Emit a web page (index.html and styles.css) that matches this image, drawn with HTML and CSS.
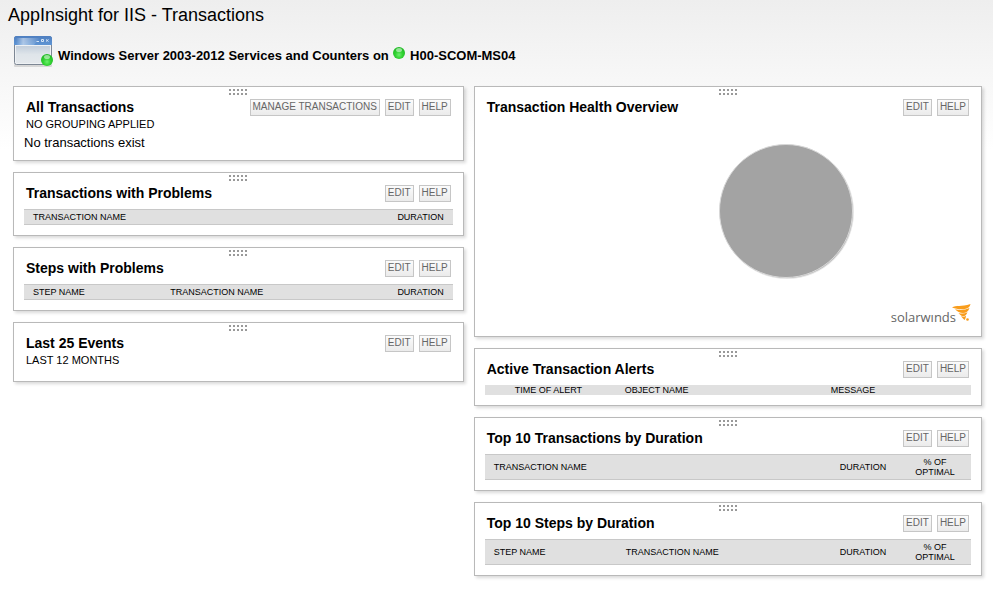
FILE: index.html
```html
<!DOCTYPE html>
<html lang="en">
<head>
  <meta charset="UTF-8" />
  <meta name="viewport" content="width=device-width, initial-scale=1.0"/>
  <title>AppInsight for IIS - Transactions</title>
  <link rel="stylesheet" href="styles.css">
</head>
<body>
  <header class="page-header">
    <h1>AppInsight for IIS - Transactions</h1>
    <div class="node">
      <svg class="app-icon" width="40" height="32" viewBox="0 0 40 32" aria-hidden="true">
        <defs>
          <linearGradient id="bar" x1="0" y1="0" x2="0" y2="1">
            <stop offset="0" stop-color="#4f7fc0"/>
            <stop offset="1" stop-color="#5f95d4"/>
          </linearGradient>
          <linearGradient id="pane" x1="0" y1="0" x2="0" y2="1">
            <stop offset="0" stop-color="#c3cedb"/>
            <stop offset="0.5" stop-color="#dfe5ea"/>
            <stop offset="1" stop-color="#e4e8ec"/>
          </linearGradient>
          <linearGradient id="shine" x1="0" y1="0" x2="1" y2="0">
            <stop offset="0" stop-color="#fff" stop-opacity="0"/>
            <stop offset="0.3" stop-color="#fff" stop-opacity="0.5"/>
            <stop offset="1" stop-color="#fff" stop-opacity="0"/>
          </linearGradient>
          <radialGradient id="up" cx="0.5" cy="0.65" r="0.6">
            <stop offset="0" stop-color="#6cf06c"/>
            <stop offset="0.5" stop-color="#33d233"/>
            <stop offset="1" stop-color="#1fbb25"/>
          </radialGradient>
        </defs>
        <rect x="0" y="28" width="38" height="3" rx="1" fill="#000" opacity="0.12"/>
        <rect x="0.5" y="0.5" width="37" height="28" rx="2" fill="#eef1f4" stroke="#7d8794"/>
        <path d="M0 9V2.500Q0 0 2.500 0H35.500Q38 0 38 2.500V9Z" fill="url(#bar)"/>
        <path d="M2 9V2H26L20 9Z" fill="url(#shine)"/>
        <rect x="2" y="10" width="34" height="17" fill="url(#pane)"/>
        <path d="M22.500 5.500H25M27.500 3.500H29.500V5.500H27.500ZM32 3.500L34.500 5.500M34.500 3.500L32 5.500" fill="none" stroke="#d5e4f5"/>
        <circle cx="33" cy="24" r="6" fill="url(#up)"/>
        <ellipse cx="33" cy="21" rx="3" ry="2" fill="#fff" opacity="0.5"/>
      </svg>
      <p>Windows Server 2003-2012 Services and Counters on
        <svg class="status" width="12" height="12" viewBox="0 0 12 12" role="img" aria-label="Up">
          <circle cx="6" cy="6" r="6" fill="url(#up)"/>
          <ellipse cx="6" cy="3" rx="3" ry="2" fill="#fff" opacity="0.5"/>
        </svg>
        H00-SCOM-MS04</p>
    </div>
  </header>

  <main class="columns">
    <div class="column">
      <section class="panel">
        <div class="grip"></div>
        <div class="panel-head">
          <div>
            <h2>All Transactions</h2>
            <h3>No grouping applied</h3>
          </div>
          <div class="actions">
            <button type="button">Manage Transactions</button>
            <button type="button">Edit</button>
            <button type="button">Help</button>
          </div>
        </div>
        <p class="message">No transactions exist</p>
      </section>

      <section class="panel">
        <div class="grip"></div>
        <div class="panel-head">
          <h2>Transactions with Problems</h2>
          <div class="actions">
            <button type="button">Edit</button>
            <button type="button">Help</button>
          </div>
        </div>
        <table>
          <thead>
            <tr>
              <th>Transaction Name</th>
              <th class="right">Duration</th>
            </tr>
          </thead>
        </table>
      </section>

      <section class="panel">
        <div class="grip"></div>
        <div class="panel-head">
          <h2>Steps with Problems</h2>
          <div class="actions">
            <button type="button">Edit</button>
            <button type="button">Help</button>
          </div>
        </div>
        <table>
          <thead>
            <tr>
              <th class="col-step">Step Name</th>
              <th>Transaction Name</th>
              <th class="right">Duration</th>
            </tr>
          </thead>
        </table>
      </section>

      <section class="panel panel-empty">
        <div class="grip"></div>
        <div class="panel-head">
          <div>
            <h2>Last 25 Events</h2>
            <h3>Last 12 months</h3>
          </div>
          <div class="actions">
            <button type="button">Edit</button>
            <button type="button">Help</button>
          </div>
        </div>
      </section>
    </div>

    <div class="column">
      <section class="panel">
        <div class="grip"></div>
        <div class="panel-head">
          <h2>Transaction Health Overview</h2>
          <div class="actions">
            <button type="button">Edit</button>
            <button type="button">Help</button>
          </div>
        </div>
        <div class="chart">
          <svg class="pie" width="136" height="138" viewBox="0 0 136 138" role="img" aria-label="Transaction health">
            <circle cx="69" cy="69" r="67" fill="#000" opacity="0.1"/>
            <circle cx="69" cy="69" r="66" fill="#000" opacity="0.2"/>
            <circle cx="68" cy="68" r="66.500" fill="#a3a3a3" stroke="#d8d8d8"/>
          </svg>
        </div>
        <div class="brand">
          <span>solarwınds</span>
          <svg width="19" height="18" viewBox="0 0 19 18" aria-hidden="true">
            <g fill="#f99d1c">
              <path d="M0 3.500C4 1 9 3 18.500 0C18 3 16 4.500 12 5.200C8 5.600 4 5 0 3.500Z"/>
              <path d="M3 5.200C8 6.500 13 6 17.500 4C16.500 7.500 14 9 11 9C8 8.800 5 7.500 3 5.200Z"/>
              <path d="M6.500 9C9.500 10 12.500 9.700 15.500 8.200C14.500 11 13 12.200 11 12.200C9.500 12 8 11 6.500 9Z"/>
              <path d="M9 12.200C11 13 12.500 12.800 14 11.800C13.800 14 13.300 15 12.500 16C11.500 14.800 10 13.800 9 12.200Z"/>
              <circle cx="15.500" cy="15.500" r="1.300"/>
            </g>
          </svg>
        </div>
      </section>

      <section class="panel">
        <div class="grip"></div>
        <div class="panel-head">
          <h2>Active Transaction Alerts</h2>
          <div class="actions">
            <button type="button">Edit</button>
            <button type="button">Help</button>
          </div>
        </div>
        <table class="alerts">
          <thead>
            <tr>
              <td class="col-icon"></td>
              <th class="col-time">Time of Alert</th>
              <th class="col-object">Object Name</th>
              <th>Message</th>
            </tr>
          </thead>
        </table>
      </section>

      <section class="panel">
        <div class="grip"></div>
        <div class="panel-head">
          <h2>Top 10 Transactions by Duration</h2>
          <div class="actions">
            <button type="button">Edit</button>
            <button type="button">Help</button>
          </div>
        </div>
        <table class="top10">
          <thead>
            <tr>
              <th>Transaction Name</th>
              <th class="col-number">Duration</th>
              <th class="col-number">% of Optimal</th>
            </tr>
          </thead>
        </table>
      </section>

      <section class="panel">
        <div class="grip"></div>
        <div class="panel-head">
          <h2>Top 10 Steps by Duration</h2>
          <div class="actions">
            <button type="button">Edit</button>
            <button type="button">Help</button>
          </div>
        </div>
        <table class="top10">
          <thead>
            <tr>
              <th class="col-top-step">Step Name</th>
              <th>Transaction Name</th>
              <th class="col-number">Duration</th>
              <th class="col-number">% of Optimal</th>
            </tr>
          </thead>
        </table>
      </section>
    </div>
  </main>
</body>
</html>
```

FILE: styles.css
```css
* {
  box-sizing: border-box;
}

body {
  margin: 0;
  font-family: "Liberation Sans", Arial, sans-serif;
  font-size: 13px;
  color: #000;
  background: #fff linear-gradient(#eeeeee, #ffffff) no-repeat;
  background-size: 100% 150px;
}

h1, h2, h3, p {
  margin: 0;
}

/* Page header */
.page-header {
  padding: 5px 8px 0;
}

.page-header h1 {
  font-size: 18px;
  line-height: 20px;
  font-weight: normal;
}

.node {
  display: flex;
  align-items: center;
  gap: 4px;
  padding: 11px 6px 0;
}

.node p {
  font-weight: bold;
  line-height: 20px;
  padding-top: 8px;
}

.app-icon {
  flex: none;
}

.status {
  margin: 0 1px;
  vertical-align: 1px;
}

/* Layout */
.columns {
  display: grid;
  grid-template-columns: 47fr 53fr;
  gap: 10px;
  align-items: start;
  padding: 18px 11px 13px 13px;
}

.column {
  display: grid;
  gap: 11px;
}

/* Panels */
.panel {
  padding: 2px 10px 10px;
  background: #fff;
  border: 1px solid #b9b9b9;
  box-shadow: 2px 2px 3px rgba(0, 0, 0, 0.15);
}

.panel-empty {
  min-height: 60px;
}

.grip {
  width: 18px;
  height: 6px;
  margin: 0 auto 4px;
  background:
    repeating-linear-gradient(to bottom, transparent 0 2px, #fff 2px 4px),
    repeating-linear-gradient(to right, #999 0 2px, #fff 2px 4px);
}

.panel-head {
  display: flex;
  justify-content: space-between;
  align-items: flex-start;
  padding: 0 2px;
}

.panel-head h2 {
  font-size: 14px;
  line-height: 17px;
}

.panel-head h3 {
  font-size: 11px;
  line-height: 17px;
  font-weight: normal;
  text-transform: uppercase;
}

.actions {
  display: flex;
  gap: 5px;
}

.actions button {
  height: 17px;
  padding: 0 2px 2px;
  font-family: inherit;
  font-size: 10px;
  line-height: 12px;
  text-transform: uppercase;
  color: #666;
  background: linear-gradient(#fbfbfb, #ebebeb);
  border: 1px solid #c6c6c6;
  cursor: pointer;
}

.actions button:hover {
  background: #e2e2e2;
}

.message {
  padding-top: 2px;
  line-height: 15px;
}

/* Tables */
table {
  width: 100%;
  margin-top: 7px;
  border-collapse: separate;
  border-spacing: 0;
  table-layout: fixed;
}

th, td {
  padding: 2px 9px;
  font-size: 9px;
  line-height: 10px;
  font-weight: normal;
  text-align: left;
  text-transform: uppercase;
  background: #e0e0e0;
  border-top: 1px solid #c8c8c8;
  border-bottom: 1px solid #c8c8c8;
}

.right {
  text-align: right;
}

.col-step {
  width: 32%;
}

.alerts th, .alerts td {
  padding: 0;
  border: none;
}

.col-icon {
  width: 30px;
}

.col-time {
  width: 110px;
}

.col-object {
  width: 206px;
}

.top10 .col-number {
  width: 72px;
  text-align: center;
}

.col-top-step {
  width: 132px;
}

/* Health chart */
.chart {
  padding: 27px 0 23px 24%;
  text-align: center;
}

.pie {
  display: block;
  margin: 0 auto;
}

.brand {
  display: flex;
  justify-content: flex-end;
  align-items: flex-start;
  height: 22px;
}

.brand span {
  margin-right: -4px;
  padding-top: 2px;
  font-family: "Open Sans", sans-serif;
  font-size: 13px;
  line-height: 22px;
  color: #666;
}
```
